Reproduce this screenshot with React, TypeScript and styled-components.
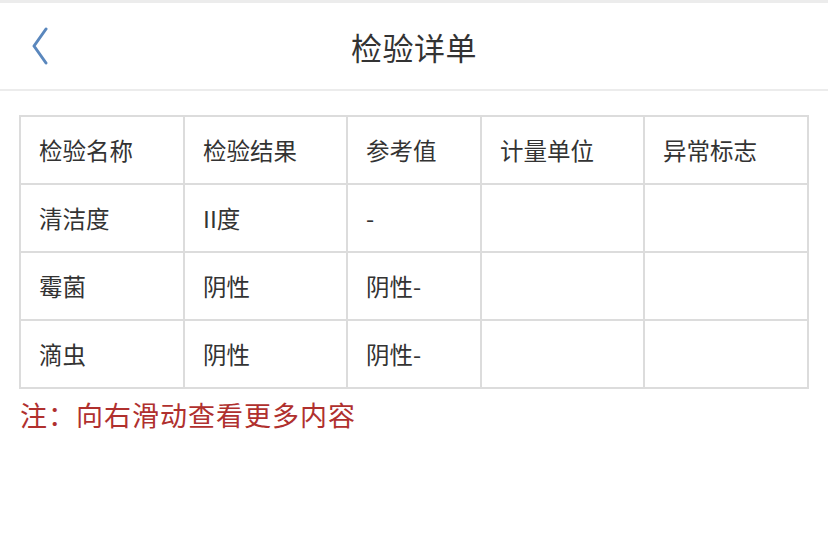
import styled, { createGlobalStyle } from 'styled-components'

const GlobalStyle = createGlobalStyle`
  html, body {
    margin: 0;
    padding: 0;
    background: #fff;
    font-family: "Noto Sans CJK SC", "Noto Sans", sans-serif;
  }
`

const headers = ['检验名称', '检验结果', '参考值', '计量单位', '异常标志']
const rows = [
  ['清洁度', 'II度', '-', '', ''],
  ['霉菌', '阴性', '阴性-', '', ''],
  ['滴虫', '阴性', '阴性-', '', ''],
]
const colWidths = [164, 163, 134, 163, 164]

function App() {
  return (
    <>
      <GlobalStyle />
      <Page>
        <TopStrip />
        <NavBar>
          <BackButton aria-label="back">
            <svg width="20" height="38" viewBox="0 0 20 38">
              <path d="M16 2 L4 19 L16 36" fill="none" stroke="#5a87bd" strokeWidth="3" strokeLinecap="round" strokeLinejoin="round" />
            </svg>
          </BackButton>
          <Title>检验详单</Title>
        </NavBar>
        <Content>
          <Table>
            <colgroup>
              {colWidths.map((w, i) => <col key={i} style={{ width: w }} />)}
            </colgroup>
            <thead>
              <tr>
                {headers.map((h) => <Cell as="th" key={h}>{h}</Cell>)}
              </tr>
            </thead>
            <tbody>
              {rows.map((r, i) => (
                <tr key={i}>
                  {r.map((c, j) => <Cell key={j}>{c}</Cell>)}
                </tr>
              ))}
            </tbody>
          </Table>
          <Note>注：向右滑动查看更多内容</Note>
        </Content>
      </Page>
    </>
  )
}

const Page = styled.div`
  width: 828px;
  min-height: 557px;
  background: #fff;
`

const TopStrip = styled.div`
  height: 3px;
  background: #ececec;
`

const NavBar = styled.div`
  position: relative;
  height: 86px;
  display: flex;
  align-items: center;
  justify-content: center;
  border-bottom: 2px solid #ececec;
`

const BackButton = styled.div`
  position: absolute;
  left: 30px;
  top: 24px;
  display: flex;
`

const Title = styled.h1`
  margin: 0;
  font-size: 31px;
  font-weight: 400;
  color: #333;
  letter-spacing: 0.5px;
`

const Content = styled.div`
  padding: 24px 20px 0 19px;
`

const Table = styled.table`
  border-collapse: collapse;
  table-layout: fixed;
  width: 788px;
  border: 2px solid #dcdcdc;
`

const Cell = styled.td`
  height: 66px;
  padding: 0 0 0 18px;
  border: 2px solid #dcdcdc;
  text-align: left;
  font-size: 23.5px;
  font-weight: 400;
  color: #333;
  vertical-align: middle;
`

const Note = styled.div`
  margin-top: 6px;
  padding-left: 1px;
  font-size: 27px;
  line-height: 40px;
  color: #b0302e;
  letter-spacing: 1px;
`

export default App
